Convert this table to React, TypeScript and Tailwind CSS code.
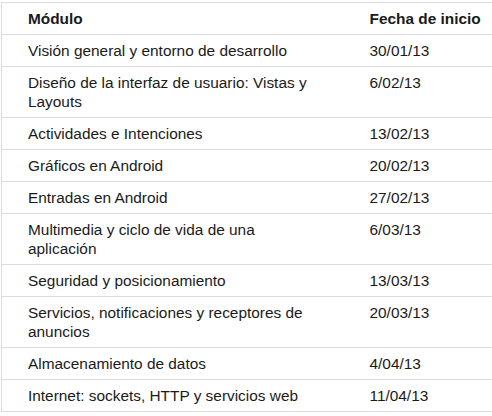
import React from 'react';

const rows = [
    { modulo: 'Visión general y entorno de desarrollo', fecha: '30/01/13' },
    { modulo: 'Diseño de la interfaz de usuario: Vistas y Layouts', fecha: '6/02/13' },
    { modulo: 'Actividades e Intenciones', fecha: '13/02/13' },
    { modulo: 'Gráficos en Android', fecha: '20/02/13' },
    { modulo: 'Entradas en Android', fecha: '27/02/13' },
    { modulo: 'Multimedia y ciclo de vida de una aplicación', fecha: '6/03/13' },
    { modulo: 'Seguridad y posicionamiento', fecha: '13/03/13' },
    { modulo: 'Servicios, notificaciones y receptores de anuncios', fecha: '20/03/13' },
    { modulo: 'Almacenamiento de datos', fecha: '4/04/13' },
    { modulo: 'Internet: sockets, HTTP y servicios web', fecha: '11/04/13' },
];

const App = () => {
    return (
        <div className="bg-white w-[492px] h-[416px] overflow-hidden pt-[2px] pl-[1px]">
            <table
                className="w-[520px] border-collapse text-[15.4px] leading-[19px] text-[#1a1a1a]"
                style={{ fontFamily: '"Liberation Sans", Arial, sans-serif' }}
            >
                <thead>
                    <tr className="border-t border-l border-b border-[#dcdcdc]">
                        <th className="w-[343px] pl-[26px] pr-[27px] py-[6px] text-left font-bold align-top">Módulo</th>
                        <th className="pl-[25px] py-[6px] text-left font-bold align-top">Fecha de inicio</th>
                    </tr>
                </thead>
                <tbody>
                    {rows.map((row) => (
                        <tr key={row.fecha} className="border-l border-b border-[#dcdcdc]">
                            <td className="pl-[26px] pr-[27px] py-[6px] align-top">{row.modulo}</td>
                            <td className="pl-[25px] py-[6px] align-top">{row.fecha}</td>
                        </tr>
                    ))}
                </tbody>
            </table>
        </div>
    );
};

export default App;
